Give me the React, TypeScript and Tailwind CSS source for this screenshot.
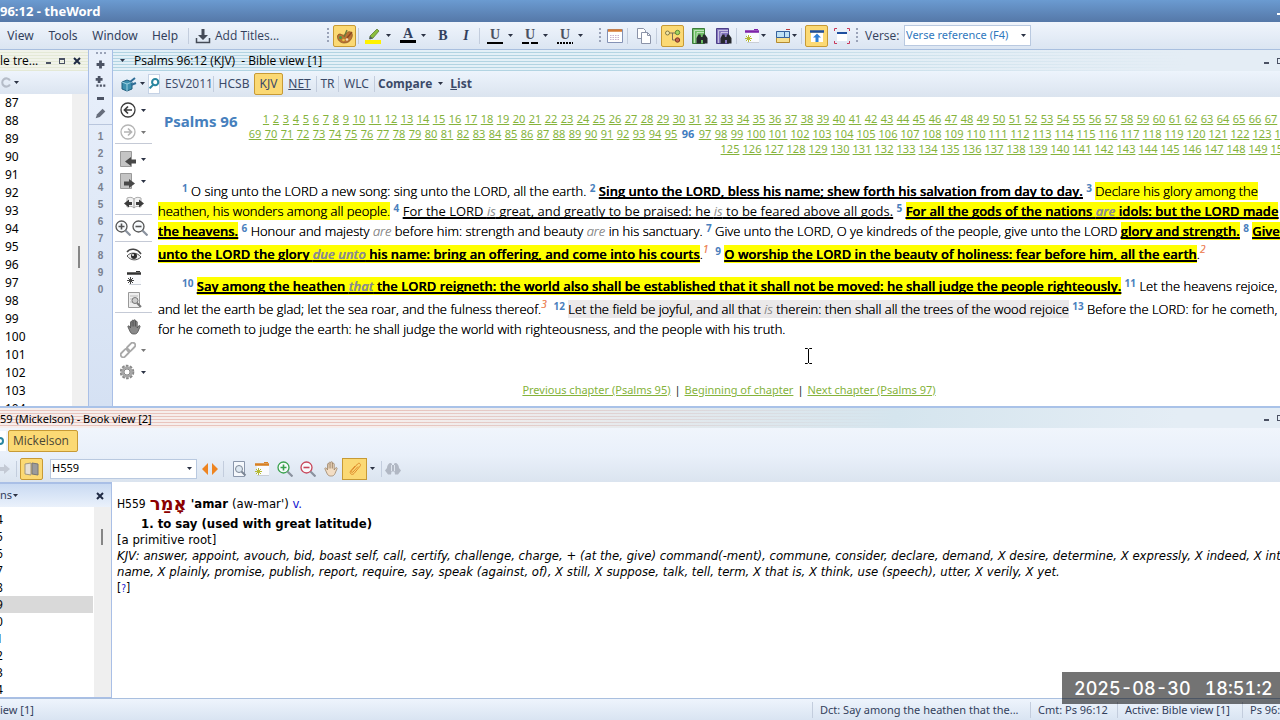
import type { ReactNode } from "react"

const ui = "font-['Noto_Sans',sans-serif]"

function Caret({ light = false }: { light?: boolean }) {
  return (
    <svg className="shrink-0" width="5" height="3" viewBox="0 0 5 3">
      <path d="M0 0h5L2.5 3z" fill={light ? "#777" : "#2b3244"} />
    </svg>
  )
}

function Sep() {
  return <span className="h-4 w-px shrink-0 bg-[#c3cddd]" />
}

function Grip() {
  return <span className="h-4 w-0.5 shrink-0 bg-[repeating-linear-gradient(to_bottom,#9aa3b8_0_2px,transparent_2px_4px)]" />
}

function Ico({ children, size = 16 }: { children: ReactNode; size?: number }) {
  return (
    <svg className="shrink-0" width={size} height={size} viewBox="0 0 16 16" fill="none">
      {children}
    </svg>
  )
}

// toolbar button, optionally pressed
function Tool({ label, on, children }: { label: string; on?: boolean; children: ReactNode }) {
  return (
    <button
      aria-label={label}
      className={
        on
          ? "flex h-[22px] w-[23px] shrink-0 items-center justify-center rounded-xs border border-[#c79a35] bg-[#fbd974]"
          : "flex h-[22px] w-4 shrink-0 items-center justify-center"
      }
    >
      {children}
    </button>
  )
}

// icon with drop-down arrow
function Split({ label, children, light }: { label: string; children: ReactNode; light?: boolean }) {
  return (
    <button aria-label={label} className="flex h-[22px] w-[35px] shrink-0 items-center gap-[5px]">
      {children}
      <Caret light={light} />
    </button>
  )
}

function Underline({ dash }: { dash?: string }) {
  return (
    <span className="flex w-4 flex-col items-center font-['Liberation_Serif',serif] text-[14px] leading-[14px] font-bold text-[#4a5160]">
      U
      <svg width="16" height="2" viewBox="0 0 16 2">
        <path d="M0 1h16" stroke="#000" strokeWidth="2" strokeDasharray={dash} />
      </svg>
    </span>
  )
}

function Lens({ sign, color }: { sign?: string; color: string }) {
  return (
    <Ico>
      <circle cx="6.5" cy="6.5" r="5.5" fill="#f7fafc" stroke={color} strokeWidth="1.3" />
      <path d="M10.5 10.5l5 5" stroke="#8a929e" strokeWidth="2.2" />
      {sign && <path d={sign} stroke={color} strokeWidth="1.6" />}
    </Ico>
  )
}

const plus = "M3.5 6.5h6M6.5 3.5v6"
const minus = "M3.5 6.5h6"

function BookSearch({ fill, dark }: { fill: string; dark: string }) {
  return (
    <Ico>
      <path d="M.5.5h12v15H.5z" fill={fill} stroke={dark} />
      <path d="M2.500 15V2.500H12M5 15V4.500h7" stroke="#fff" strokeOpacity=".55" />
      <path d="M4.500 15.500V10L6.500 6.500h2L9 9h1.500l.5-2.500h2l2.500 3.500v5.500H11V12H9v3.500z" fill="#27292e" />
    </Ico>
  )
}

function Hand({ fill, stroke }: { fill: string; stroke: string }) {
  return (
    <Ico>
      <path
        d="M4.500 9V3.200c0-1 1.600-1 1.600 0V1.800c0-1 1.700-1 1.700 0v-.3c0-1 1.700-1 1.700 0V3c0-1 1.700-1 1.700 0v6l1.300-2c.7-.9 2-.3 1.500.8L12 12.500c-.8 1.800-1.800 2.500-3.500 2.500H7.500c-2 0-3-1.300-3.700-3L2 8c-.5-1 .8-1.600 1.400-.8z"
        fill={fill}
        stroke={stroke}
        strokeWidth=".8"
      />
      <path d="M6.100 3v4.500M7.800 2v5.500M9.500 2.500v5" stroke={stroke} strokeWidth=".8" />
    </Ico>
  )
}

function NewNote({ bar, star }: { bar: string; star: string }) {
  return (
    <Ico>
      <path d="M3 5h12v9H3z" fill="#fafbfd" />
      <path d="M3 14.500h12" stroke="#c9ced6" />
      <path d="M1 3.500h14" stroke={bar} strokeWidth="2.500" />
      <path d="M10 1.500h4" stroke={bar} />
      <path d="M1 10.500h7M4.500 7v7M2 8l5 5M7 8l-5 5" stroke={star} strokeWidth="1" />
    </Ico>
  )
}

function Palette() {
  return (
    <Ico>
      <path d="M.5 8c.5-2 2-2.500 4-1.500s3 1 4-.5 3-3 5-2 2.500 3.500 1 6.500-4 4.500-7.500 4.500S0 12 .5 8z" fill="#bb7334" stroke="#84501f" strokeWidth=".7" />
      <path d="M7 9l3-7" stroke="#6a7a3a" strokeWidth="1.400" />
      <path d="M10 10l5-6" stroke="#8a4a22" strokeWidth="1.400" />
      <circle cx="3.500" cy="9.500" r="1.500" fill="#4c9a47" />
      <circle cx="6.500" cy="12" r="1.300" fill="#e6c545" />
      <circle cx="10" cy="11.500" r="1.300" fill="#f0dcb4" />
    </Ico>
  )
}

function MenuBar() {
  return (
    <div className="flex h-7 shrink-0 items-center overflow-hidden border-b border-[#a9bfdf] bg-linear-to-b from-[#f0f5fc] to-[#dbe5f2] text-[12px] text-[#333f5c]">
      <nav className="flex w-[327px] shrink-0 items-center">
        <button className="w-[41px]">View</button>
        <button className="w-11">Tools</button>
        <button className="w-[60px]">Window</button>
        <button className="w-10">Help</button>
        <span className="flex items-center gap-1.5 pl-[3px]">
          <Sep />
          <button className="flex items-center gap-1 font-['Open_Sans',sans-serif]">
            <Ico>
              <path d="M6.500 1h3v6H13l-5 5-5-5h3.500z" fill="#454b57" />
              <path d="M1.500 10v4.500h13V10" stroke="#454b57" strokeWidth="1.500" />
            </Ico>
            Add Titles...
          </button>
        </span>
      </nav>

      <div className="flex shrink-0 items-center gap-1">
        <Grip />
        <Tool label="Colors" on>
          <Palette />
        </Tool>
      </div>
      <div className="flex shrink-0 items-center pl-0.5">
        <Sep />
        <span className="w-1.5" />
        <Split label="Highlight">
          <Ico>
            <path d="M0 12h16v4H0z" fill="#fff200" />
            <path d="M5 8l7-7 2 2-6 7-3 1z" fill="#8bbf3d" stroke="#5f7d35" strokeWidth=".8" />
            <path d="M5 8l3 2.500-4 .8z" fill="#4e5a66" />
          </Ico>
        </Split>
        <Split label="Font color">
          <span className="flex w-4 flex-col items-center font-['Liberation_Serif',serif] text-[14px] leading-3 font-bold">
            A
            <span className="h-[3px] w-4 bg-black" />
          </span>
        </Split>
      </div>
      <div className="flex shrink-0 items-center gap-[7px] pr-[5px] font-['Liberation_Serif',serif] text-[14px] font-bold">
        <Tool label="Bold">B</Tool>
        <Tool label="Italic">
          <i>I</i>
        </Tool>
      </div>
      <Sep />
      <div className="flex shrink-0 items-center px-[7px]">
        <Split label="Underline">
          <Underline />
        </Split>
        <Split label="Dashed underline">
          <Underline dash="7 2" />
        </Split>
        <Split label="Dotted underline">
          <Underline dash="2 1" />
        </Split>
      </div>

      <div className="flex shrink-0 items-center gap-1">
        <Grip />
        <span className="-ml-0.5" />
        <Tool label="Calendar">
          <Ico>
            <path d="M.5 1.500h15v13H.5z" fill="#fff" stroke="#8492b5" />
            <path d="M1 2.500h14" stroke="#d67b35" strokeWidth="2.500" />
            <path d="M3 7.500h10M3 9.500h10M3 11.500h10" stroke="#c9b2cf" strokeDasharray="1.500 1" />
          </Ico>
        </Tool>
        <Sep />
        <span />
        <Tool label="Copy">
          <Ico>
            <path d="M1.500.5h6l2 2v8h-8z" fill="#fff" stroke="#8b93a8" />
            <path d="M5.500 4.500h6l3 3v8h-9z" fill="#fff" stroke="#8b93a8" />
            <path d="M11.500 4.500v3h3" stroke="#8b93a8" />
          </Ico>
        </Tool>
        <Sep />
        <Tool label="Tree" on>
          <Ico>
            <path d="M4 5h8M7.500 5v7H12" stroke="#7b715a" />
            <circle cx="2.500" cy="5" r="2" fill="#f3e7a8" stroke="#857a43" />
            <circle cx="12.500" cy="4.500" r="2.200" fill="#a6d35f" stroke="#598837" />
            <circle cx="12.500" cy="12" r="2.200" fill="#c5644b" stroke="#7a3725" />
          </Ico>
        </Tool>
        <span />
        <Tool label="Search bible">
          <BookSearch fill="#6fbd67" dark="#3c7c3b" />
        </Tool>
        <span />
        <Tool label="Search book">
          <BookSearch fill="#8476bd" dark="#4d3f88" />
        </Tool>
        <Sep />
      </div>
      <div className="flex shrink-0 items-center gap-[9px] pr-1 pl-[7px]">
        <button aria-label="New note" className="flex items-center gap-px">
          <NewNote bar="#7f22a8" star="#b5b933" />
          <Caret />
        </button>
        <button aria-label="Layout" className="flex items-center gap-px">
          <Ico>
            <path d="M1.500 3.500h13v11h-13z" fill="#f7e08e" stroke="#b58b30" />
            <path d="M1.500 3.500h8v6h-8zM9.500 3.500h5v6h-5z" fill="#bfe2f5" stroke="#35629f" />
            <path d="M11 1.500h4" stroke="#b93c3c" />
          </Ico>
          <Caret />
        </button>
      </div>
      <div className="flex shrink-0 items-center gap-[3px]">
        <Sep />
        <Tool label="Sync" on>
          <Ico>
            <path d="M2 5h12v9H2z" fill="#fff" />
            <path d="M1 3.500h14" stroke="#1e4fa0" strokeWidth="2.500" />
            <path d="M8 5.500l4 4h-2.500V14h-3V9.500H4z" fill="#2f7fd6" />
          </Ico>
        </Tool>
        <span />
        <Tool label="Full screen">
          <Ico>
            <path d="M.5 3V.5H3M13 .5h2.500V3M.5 13v2.500H3M13 15.500h2.500V13" stroke="#c8395a" />
            <path d="M3 6h10v7H3z" fill="#fff" />
            <path d="M3 5h10" stroke="#1e4fa0" strokeWidth="2" />
          </Ico>
        </Tool>
        <span />
        <Grip />
      </div>
      <label className="w-[46px] shrink-0 pl-[7px] font-['Open_Sans',sans-serif]" htmlFor="verse">
        Verse:
      </label>
      <div className="relative shrink-0">
        <select
          id="verse"
          className="block h-[21px] w-[127px] appearance-none border border-[#b9c9e0] bg-white pl-px text-[11px] text-[#2f78bd]"
        >
          <option>Verse reference (F4)</option>
        </select>
        <span className="pointer-events-none absolute inset-y-0 right-[5px] flex items-center">
          <Caret />
        </span>
      </div>
    </div>
  )
}

function Min() {
  return <span className="mt-1 h-0.5 w-[5px] bg-[#4a5163]" />
}

function Close() {
  return (
    <svg width="8" height="8" viewBox="0 0 8 8">
      <path d="M1 1l6 6M7 1L1 7" stroke="#1f2a44" strokeWidth="2" />
    </svg>
  )
}

const treeRows = Array.from({ length: 18 }, (_, i) => 87 + i)

function ChapterTree() {
  return (
    <aside className="flex w-[89px] shrink-0 flex-col overflow-hidden border-r border-[#a9bfe6] bg-white text-[12px]">
      <div className="flex h-[21px] shrink-0 items-center gap-2 bg-[repeating-linear-gradient(to_bottom,#f1f3ea_0_2px,#e4e9d6_2px_3px)] text-black">
        <span className="w-[38px] font-['Open_Sans',sans-serif] text-[12px] whitespace-nowrap">le tre...</span>
        <Min />
        <span className="size-1.5 border border-t-2 border-[#4a5163]" />
        <Close />
      </div>
      <div className="flex h-[23px] shrink-0 items-center gap-0.5 bg-linear-to-b from-[#eef4fc] to-[#dce5f1] pl-px">
        <Ico size={11}>
          <path d="M13 5A6 6 0 1 0 13 11" stroke="#b5bcc8" strokeWidth="3" />
        </Ico>
        <Caret />
      </div>
      <div className="flex min-h-0 grow">
        <ul className="h-0 grow pl-[5px] text-black">
          {treeRows.map((n) => (
            <li key={n} className="h-[18px] leading-[18px]">
              {n}
            </li>
          ))}
        </ul>
        <div className="w-4 bg-[#f0f0f0] pt-[152px] pl-1.5">
          <div className="h-[22px] w-0.5 bg-[#868686]" />
        </div>
      </div>
    </aside>
  )
}

function NumberStrip() {
  return (
    <div className="flex w-[23px] shrink-0 flex-col items-center overflow-hidden bg-linear-to-b from-[#e9f0fb] to-[#d5e1f3] text-[#6e7686]">
      <span className="mt-0.5 h-0.5 w-2.5 shrink-0 bg-[repeating-linear-gradient(to_right,#9aa3b8_0_2px,transparent_2px_4px)]" />
      <div className="flex flex-col items-center pt-0.5">
        <button aria-label="Expand" className="flex h-[17px] items-center">
          <Ico size={9}>
            <path d="M8 1v14M1 8h14" stroke="#4c5364" strokeWidth="5" />
          </Ico>
        </button>
        <button aria-label="Expand all" className="flex h-[17px] items-center">
          <Ico size={11}>
            <path d="M6 0v10M1 5h10" stroke="#4c5364" strokeWidth="4" />
            <path d="M2 14h13" stroke="#4c5364" strokeWidth="3" strokeDasharray="3 2" />
          </Ico>
        </button>
        <button aria-label="Collapse" className="flex h-[17px] items-center">
          <span className="h-[3px] w-[7px] bg-[#4c5364]" />
        </button>
        <button aria-label="Edit" className="flex h-3 items-center">
          <Ico size={11}>
            <path d="M1 15l2-6 8-8 4 4-8 8z" fill="#666d7b" />
          </Ico>
        </button>
      </div>
      <div className="mt-[5px] flex w-full flex-col items-center border-t border-[#b9c6dd] pt-[3px] font-['Liberation_Sans',sans-serif] text-[10px] font-bold text-[#79818f]">
        {["1", "2", "3", "4", "5", "6", "7", "8", "9", "0"].map((n) => (
          <button key={n} className="h-[17px]">
            {n}
          </button>
        ))}
      </div>
    </div>
  )
}

function SideRule() {
  return <hr className="w-[37px] border-[#c5cad6]" />
}

function VerticalTools() {
  return (
    <div className="flex w-[45px] shrink-0 flex-col items-start pt-0.5 pl-[2px]">
      <div className="flex flex-col pl-[5px]">
        <Split label="Back">
          <Ico>
            <circle cx="8" cy="8" r="7" stroke="#3b3b3b" strokeWidth="1.300" />
            <path d="M12 8H5M8 4.500L4.500 8 8 11.500" stroke="#3b3b3b" strokeWidth="1.700" />
          </Ico>
        </Split>
        <Split label="Forward" light>
          <Ico>
            <circle cx="8" cy="8" r="7" stroke="#b5b5b5" strokeWidth="1.300" />
            <path d="M4 8h7M8 4.500L11.500 8 8 11.500" stroke="#b5b5b5" strokeWidth="1.700" />
          </Ico>
        </Split>
      </div>
      <SideRule />
      <div className="flex flex-col pt-1 pl-[5px]">
        <Split label="Previous book">
          <Ico>
            <path d="M.5.5h11v15H.5z" fill="#c4c4c4" stroke="#9a9a9a" />
            <path d="M16 8.500v4h-5V15l-6-4.500L11 6v2.500z" fill="#484848" />
          </Ico>
        </Split>
        <Split label="Next book">
          <Ico>
            <path d="M.5.5h11v15H.5z" fill="#c4c4c4" stroke="#9a9a9a" />
            <path d="M4 8.500v4h5V15l6-4.500L9 6v2.500z" fill="#484848" />
          </Ico>
        </Split>
      </div>
      <button aria-label="Open book" className="flex h-[22px] w-[37px] items-center justify-center">
        <svg width="20" height="14" viewBox="0 0 20 14">
          <path d="M3 2c3-1 5-1 7 1 2-2 4-2 7-1v9c-3-1-5-1-7 1-2-2-4-2-7-1z" fill="#f2f2f2" stroke="#aaa" />
          <path d="M10 3v9" stroke="#999" />
          <path d="M0 7.500L5 3.500v2.500h3v3H5v2.500zM20 7.500L15 3.500v2.500h-3v3h3v2.500z" fill="#3c3c3c" />
        </svg>
      </button>
      <SideRule />
      <div className="flex h-[26px] w-[37px] items-center gap-px">
        <button aria-label="Zoom in">
          <Lens sign={plus} color="#555" />
        </button>
        <button aria-label="Zoom out">
          <Lens sign={minus} color="#555" />
        </button>
      </div>
      <SideRule />
      <div className="flex w-[37px] flex-col items-center">
        <button aria-label="Show" className="flex h-[26px] items-center">
          <Ico>
            <path d="M1 5c3-4 10-4 14 2" stroke="#444" strokeWidth="1.500" />
            <path d="M1 9c3-4 10-4 14 1-4 4-10 4-14-1z" fill="#eee" stroke="#555" />
            <circle cx="8" cy="9" r="3" fill="#2c2c2c" />
            <circle cx="7" cy="8" r="1" fill="#fff" />
          </Ico>
        </button>
        <button aria-label="Note" className="flex h-5 items-center">
          <NewNote bar="#333" star="#444" />
        </button>
        <button aria-label="Find in page" className="flex h-6 items-center">
          <Ico>
            <path d="M2.500.5h11v15h-11z" fill="#eee" stroke="#999" />
            <path d="M4 4h8M4 7h8M4 10h8" stroke="#bbb" />
            <circle cx="9" cy="8.500" r="3" fill="#ccc" stroke="#777" />
            <path d="M11 11l4 4" stroke="#777" strokeWidth="2" />
          </Ico>
        </button>
      </div>
      <SideRule />
      <div className="flex w-[37px] flex-col items-center pt-0.5">
        <button aria-label="Pan" className="flex h-6 items-center">
          <Hand fill="#8a8a8a" stroke="#4a4a4a" />
        </button>
      </div>
      <div className="flex flex-col pl-[5px]">
        <Split label="Link" light>
          <Ico>
            <rect x="6" y="2.500" width="10" height="5" rx="2.500" transform="rotate(-45 11 5)" stroke="#a8a8a8" strokeWidth="1.800" />
            <rect x="0" y="8.500" width="10" height="5" rx="2.500" transform="rotate(-45 5 11)" stroke="#a8a8a8" strokeWidth="1.800" />
          </Ico>
        </Split>
        <Split label="Settings">
          <Ico>
            <circle cx="7" cy="8" r="6.200" stroke="#888" strokeWidth="2.200" strokeDasharray="2.600 1.300" />
            <circle cx="7" cy="8" r="4.500" stroke="#a6a6a6" strokeWidth="2.500" />
            <circle cx="7" cy="8" r="3" stroke="#6e6e6e" strokeWidth=".8" />
          </Ico>
        </Split>
      </div>
    </div>
  )
}

const range = (a: number, b: number) => Array.from({ length: b - a + 1 }, (_, i) => a + i)

function ChapterLink({ n }: { n: number }) {
  if (n === 96) return <b className="w-3.5 shrink-0 text-center text-[11px] text-[#3f7dc0]">96</b>
  const w = n < 10 ? "w-1.5" : n < 100 ? "w-3" : "w-[18px]"
  return (
    <a href={"#" + n} className={w + " flex shrink-0 justify-center underline underline-offset-1"}>
      {n}
    </a>
  )
}

function V({ n }: { n: number }) {
  return <sup className="-top-1 text-[10px] leading-none font-bold text-[#4a80bd] text-shadow-none">{n}</sup>
}

function Note({ n }: { n: number }) {
  return <sup className="-top-1.5 text-[10px] leading-none font-normal text-[#ee8a62] italic">{n}</sup>
}

function G({ children }: { children: ReactNode }) {
  return <i className="text-[#8c8c8c]">{children}</i>
}

const line = "underline decoration-2 underline-offset-1 [text-decoration-skip-ink:none]"

function U({ children }: { children: ReactNode }) {
  return <span className={"font-normal text-shadow-none " + line}>{children}</span>
}

function Hl({ children }: { children: ReactNode }) {
  return <mark className={"bg-[#ffff00] font-semibold text-black " + line}>{children}</mark>
}

function Yellow({ children }: { children: ReactNode }) {
  return <mark className="bg-[#ffff00] text-black">{children}</mark>
}

function Scripture() {
  return (
    <div className="font-['Open_Sans',sans-serif] text-[13px] leading-5 font-light whitespace-nowrap text-black [text-shadow:0_0_0]">
      <p>
        <span className="block pl-6">
          <V n={1} /> O sing unto the LORD a new song: sing unto the LORD, all the earth. <V n={2} />{" "}
          <b className={"font-semibold " + line}>Sing unto the LORD, bless his name; shew forth his salvation from day to day.</b>{" "}
          <V n={3} /> <Yellow>Declare his glory among the</Yellow>
        </span>
        <span className="block">
          <Yellow>heathen, his wonders among all people.</Yellow> <V n={4} />{" "}
          <U>
            For the LORD <G>is</G> great, and greatly to be praised: he <G>is</G> to be feared above all gods.
          </U>{" "}
          <V n={5} />{" "}
          <Hl>
            For all the gods of the nations <G>are</G> idols: but the LORD made
          </Hl>
        </span>
        <span className="block">
          <Hl>the heavens.</Hl> <V n={6} /> Honour and majesty <G>are</G> before him: strength and beauty <G>are</G> in his sanctuary.{" "}
          <V n={7} /> Give unto the LORD, O ye kindreds of the people, give unto the LORD <Hl>glory and strength.</Hl> <V n={8} />{" "}
          <Hl>Give</Hl>
        </span>
        <span className="block pt-[3px]">
          <Hl>
            unto the LORD the glory <G>due unto</G> his name: bring an offering, and come into his courts
          </Hl>
          .<Note n={1} /> &nbsp;<V n={9} /> <Hl>O worship the LORD in the beauty of holiness: fear before him, all the earth</Hl>.
          <Note n={2} />
        </span>
      </p>
      <p className="pt-3">
        <span className="block pl-6">
          <V n={10} />{" "}
          <Hl>
            Say among the heathen <G>that</G> the LORD reigneth: the world also shall be established that it shall not be moved: he shall judge
            the people righteously.
          </Hl>{" "}
          <V n={11} /> Let the heavens rejoice,
        </span>
        <span className="block pt-[3px]">
          and let the earth be glad; let the sea roar, and the fulness thereof.
          <Note n={3} /> &nbsp;<V n={12} />{" "}
          <span className="bg-[#ebe9ea]">
            Let the field be joyful, and all that <G>is</G> therein: then shall all the trees of the wood rejoice
          </span>{" "}
          <V n={13} /> Before the LORD: for he cometh,
        </span>
        <span className="block">for he cometh to judge the earth: he shall judge the world with righteousness, and the people with his truth.</span>
      </p>
    </div>
  )
}

function BibleView() {
  return (
    <section className="flex min-w-0 grow flex-col border-l border-[#a9bfe6] bg-white">
      <div className="flex h-[21px] shrink-0 items-center gap-[9px] bg-[linear-gradient(to_right,transparent_40%,#e4edf5_92%),repeating-linear-gradient(to_bottom,#e3f0f7_0_2px,#b2d4e2_2px_3px)] pl-[7px] font-['Open_Sans',sans-serif] text-[12px] whitespace-pre text-black">
        <Caret />
        Psalms 96:12 (KJV)  - Bible view [1]
        <span className="ml-auto flex items-center gap-2">
          <Min />
          <span className="w-[3px] border border-r-0 border-[#4a5163] py-0.5" />
        </span>
      </div>

      <div className="flex h-[26px] shrink-0 items-center bg-linear-to-b from-[#edf4fc] to-[#dbe4ef] pb-px text-[12px] text-[#3b4a68]">
        <div className="flex w-[49px] items-center gap-[3px] pl-2">
          <Ico>
            <path d="M1 6l5-2 5 2v7l-5 2-5-2z" fill="#3d8fae" stroke="#1e5c7d" />
            <path d="M1 6l5 2 5-2M6 8v7" stroke="#9ed2e3" />
            <path d="M9 6l5-4M10 9l5-2" stroke="#2f6d96" strokeWidth="2" />
          </Ico>
          <Caret />
          <span className="flex h-5 w-3 shrink-0 items-center border border-[#c5d2e5] bg-white">
            <Ico size={11}>
              <circle cx="9" cy="6" r="4.500" stroke="#2a86a0" strokeWidth="3" />
              <path d="M6 10l-5 5" stroke="#2a86a0" strokeWidth="3" />
            </Ico>
          </span>
        </div>
        <button className="w-[51px] pl-[3px] font-['Open_Sans',sans-serif]">ESV2011</button>
        <Sep />
        <button className="w-10">HCSB</button>
        <button className="h-[22px] w-[29px] rounded-xs border border-[#c79a35] bg-[#fbd974]">KJV</button>
        <button className="w-[33px] underline">NET</button>
        <Sep />
        <button className="w-[21px]">TR</button>
        <Sep />
        <button className="w-[35px]">WLC</button>
        <Sep />
        <button className="flex items-center gap-1.5 pl-[3px] font-['Open_Sans',sans-serif] font-bold">
          <span>
            Com<u>p</u>are
          </span>
          <Caret />
        </button>
        <button className="pl-[7px] font-['Open_Sans',sans-serif] font-bold">
          <u>L</u>ist
        </button>
      </div>

      <div className="relative flex min-h-0 grow overflow-hidden">
        <VerticalTools />
        <article className="min-w-0 grow pt-3.5">
          <div className="flex justify-between pl-1.5">
            <h1 className="shrink-0 text-[15px] leading-5 font-bold text-[#4680bd]">Psalms 96</h1>
            <nav className="-mr-[13px] flex shrink-0 flex-col items-end text-[11px] leading-[15px] text-[#85b33b]">
              <div className="flex gap-1">
                {range(1, 68).map((n) => (
                  <ChapterLink key={n} n={n} />
                ))}
              </div>
              <div className="flex gap-1">
                {range(69, 124).map((n) => (
                  <ChapterLink key={n} n={n} />
                ))}
              </div>
              <div className="flex gap-1 pr-1">
                {range(125, 150).map((n) => (
                  <ChapterLink key={n} n={n} />
                ))}
              </div>
            </nav>
          </div>
          <div className="pt-[25px]">
            <Scripture />
          </div>
          <div className="flex justify-center gap-1 pt-[41px] pl-5 text-[11px] leading-5 text-[#85b33b]">
            <a href="#95" className="underline">
              Previous chapter (Psalms 95)
            </a>
            <span className="text-[#222]">|</span>
            <a href="#top" className="underline">
              Beginning of chapter
            </a>
            <span className="text-[#222]">|</span>
            <a href="#97" className="underline">
              Next chapter (Psalms 97)
            </a>
          </div>
        </article>
        <svg className="absolute top-[251px] left-[691px]" width="9" height="16" viewBox="0 0 9 16">
          <path d="M1 .5h2.500l1 1 1-1H8M1 15.500h2.500l1-1 1 1H8M4.500 1v14" stroke="#000" fill="none" />
        </svg>
      </div>
    </section>
  )
}

function BookToolbar() {
  return (
    <div className="flex h-[27px] shrink-0 items-center bg-linear-to-b from-[#e9f0fa] to-[#dbe4ef] text-[12px]">
      <div className="flex w-5 shrink-0 items-center gap-1.5">
        <svg width="10" height="12" viewBox="0 0 10 12">
          <path d="M0 4h4V1l6 5-6 5V8H0z" fill="#c3c9d4" />
        </svg>
        <Sep />
      </div>
      <Tool label="Book" on>
        <Ico>
          <path d="M1 3l6-1v12l-6-1z" fill="#e6e0d6" stroke="#a09780" />
          <path d="M8 2l6 1v11l-6-1z" fill="#9b9b9b" stroke="#777" />
        </Ico>
      </Tool>
      <span className="w-[7px] shrink-0" />
      <div className="relative shrink-0">
        <select aria-label="Topic" className="block h-5 w-[147px] appearance-none border border-[#b9c9e0] bg-white pl-px text-[11px] text-black">
          <option>H559</option>
        </select>
        <span className="pointer-events-none absolute inset-y-0 right-[5px] flex items-center">
          <Caret />
        </span>
      </div>
      <div className="flex w-[34px] shrink-0 items-center gap-1 pl-1">
        <svg className="shrink-0" width="18" height="12" viewBox="0 0 18 12">
          <path d="M7 0v12L1 6zM11 0v12l6-6z" fill="#ee8420" />
        </svg>
        <Sep />
      </div>
      <div className="flex shrink-0 items-center gap-[7px]">
        <Tool label="Find">
          <Ico>
            <path d="M2.500.5h11v15h-11z" fill="#f5f8fc" stroke="#8b97ab" />
            <circle cx="8" cy="8" r="3.500" fill="#dfe9f2" stroke="#7c8796" />
            <path d="M10.500 10.500l4 4" stroke="#7c8796" strokeWidth="2" />
          </Ico>
        </Tool>
        <Tool label="New note">
          <NewNote bar="#d98021" star="#b5b933" />
        </Tool>
        <Tool label="Zoom in">
          <Lens sign={plus} color="#39a14c" />
        </Tool>
        <Tool label="Zoom out">
          <Lens sign={minus} color="#c8465a" />
        </Tool>
        <Tool label="Pan">
          <Hand fill="#f2ddc4" stroke="#9c8468" />
        </Tool>
      </div>
      <div className="flex shrink-0 items-center gap-[3px] pl-[3px]">
        <button aria-label="Attach" className="flex h-[22px] w-[25px] items-center justify-center border border-[#c79a35] bg-[#fbd974]">
          <Ico>
            <path d="M11 5.500L6 11c-1 1-2.400 0-1.500-1.200L10.500 3c1.800-1.800 4 .2 2.500 2.200L7 12.500c-2 2.200-5.200-.2-3.200-2.700L8 5" stroke="#e08c2c" />
          </Ico>
        </button>
        <Caret />
        <span />
        <Sep />
        <Tool label="Find book">
          <Ico>
            <path d="M2 7c0-3 2-5 3.500-5S7 3 7 4h2c0-1 0-2 1.500-2S14 4 14 7l2 2.500-3 4h-3l-.5-3h-3l-.5 3H3l-3-4z" fill="#b1b8c4" />
            <path d="M6.500 4v6M9.500 4v6" stroke="#dfe5ee" />
          </Ico>
        </Tool>
      </div>
    </div>
  )
}

const topics = ["4", "5", "6", "7", "8", "9", "0", "1", "2", "3", "4"]

function BookView() {
  return (
    <section className="flex h-[292px] shrink-0 flex-col border-t-2 border-[#a9c2e8]">
      <div className="flex h-5 shrink-0 items-center bg-[linear-gradient(to_right,transparent_30%,#d5e5ee_70%,#e4edf5_92%),repeating-linear-gradient(to_bottom,#f6eeec_0_2px,#e9c4bd_2px_3px)] text-black">
        <span className="pt-0.5 text-[11px]">59 (Mickelson) - Book view [2]</span>
        <span className="ml-auto flex items-center gap-2">
          <Min />
          <span className="w-[3px] border border-r-0 border-[#4a5163] py-0.5" />
        </span>
      </div>
      <div className="flex h-[27px] shrink-0 items-center gap-0.5 bg-linear-to-b from-[#f0f5fc] to-[#e9f0fa] pb-px text-[12px]">
        <span className="flex h-5 w-1.5 items-center overflow-hidden bg-white">
          <span className="-ml-1 size-2 shrink-0 rounded-full border-2 border-[#2a86a0]" />
        </span>
        <button className="h-[22px] w-[70px] rounded-xs border border-[#c79a35] bg-[#fbd974] pr-1 font-['Open_Sans',sans-serif] text-[#4a4636]">
          Mickelson
        </button>
      </div>
      <BookToolbar />
      <div className="flex min-h-0 grow bg-white">
        <aside className="flex w-28 shrink-0 flex-col border-t-2 border-r border-b border-[#a9bfe6] text-[12px]">
          <div className="flex h-[23px] shrink-0 items-center justify-between bg-linear-to-b from-[#c9daf2] to-[#eaf1fb] pr-[7px] text-[#333f5c]">
            <span className="flex items-center gap-px text-[11px]">
              ns <Caret />
            </span>
            <Close />
          </div>
          <div className="flex min-h-0 grow">
            <ul className="w-[93px] pt-1 text-black">
              {topics.map((t, i) => (
                <li key={i} className={i === 5 ? "h-[17px] bg-[#d9d9d9] leading-[17px]" : "h-[17px] leading-[17px]"}>
                  <span className="-ml-1">{t}</span>
                </li>
              ))}
            </ul>
            <div className="ml-auto w-[17px] bg-[#efefef] pt-[22px] pl-[7px]">
              <div className="h-4 w-0.5 bg-[#868686]" />
            </div>
          </div>
        </aside>
        <article className="min-w-0 grow overflow-hidden pt-2.5 pl-[5px] font-['DejaVu_Sans_Condensed','Noto_Sans',sans-serif] text-[13px] leading-4 whitespace-nowrap text-black">
          <p className="flex h-6 items-center gap-1">
            <span className="text-[12px]">H559</span>
            <span lang="he" dir="rtl" className="font-['DejaVu_Sans',sans-serif] text-[18px] font-bold text-[#8b0000]">
              אָמַר
            </span>
            <b>&apos;amar</b>
            <span>
              (aw-mar&apos;) <span className="text-[#1515d0]">v.</span>
            </span>
          </p>
          <p className="pl-6 font-bold">1. to say (used with great latitude)</p>
          <p>[a primitive root]</p>
          <p className="italic">
            KJV: answer, appoint, avouch, bid, boast self, call, certify, challenge, charge, + (at the, give) command(-ment), commune, consider,
            declare, demand, X desire, determine, X expressly, X indeed, X intend,
          </p>
          <p className="italic">
            name, X plainly, promise, publish, report, require, say, speak (against, of), X still, X suppose, talk, tell, term, X that is, X think,
            use (speech), utter, X verily, X yet.
          </p>
          <p className="text-[12px]">
            [
            <a href="#help" className="text-[10px] text-[#1515d0]">
              ?
            </a>
            ]
          </p>
        </article>
      </div>
    </section>
  )
}

export default function App() {
  return (
    <div className={"relative flex h-screen flex-col overflow-hidden bg-white " + ui}>
      <header className="flex h-[22px] shrink-0 items-center justify-between bg-linear-to-b from-[#6b9bd1] to-[#5578a8] pt-px text-[13px] font-bold text-white">
        96:12 - theWord
        <span className="mt-1 h-0.5 w-[3px] bg-white" />
      </header>
      <MenuBar />
      <main className="flex min-h-0 grow">
        <ChapterTree />
        <NumberStrip />
        <BibleView />
      </main>
      <BookView />
      <footer className="flex h-[22px] shrink-0 items-center overflow-hidden border-t border-[#a9bfdf] bg-linear-to-b from-[#eef4fc] to-[#d9e4f2] pt-px text-[11px] whitespace-nowrap text-[#333f5c]">
        <span>iew [1]</span>
        <div className="ml-auto flex items-center">
          <div className="flex w-[218px] items-center gap-[7px]">
            <Sep />
            Dct: Say among the heathen that the...
          </div>
          <div className="flex w-[87px] items-center gap-[7px]">
            <Sep />
            Cmt: Ps 96:12
          </div>
          <div className="flex w-[125px] items-center gap-[7px]">
            <Sep />
            Active: Bible view [1]
          </div>
          <div className="flex w-[38px] items-center gap-[7px] overflow-hidden">
            <Sep />
            Ps 96:
          </div>
        </div>
      </footer>
      <time className="absolute right-0 bottom-4 flex h-8 w-[218px] items-center gap-3.5 overflow-hidden bg-black/55 pl-3 font-['Inter',sans-serif] text-[18px] font-medium whitespace-nowrap text-white tabular-nums">
        <span>2025-08-30</span>
        <span>18:51:2</span>
      </time>
    </div>
  )
}
